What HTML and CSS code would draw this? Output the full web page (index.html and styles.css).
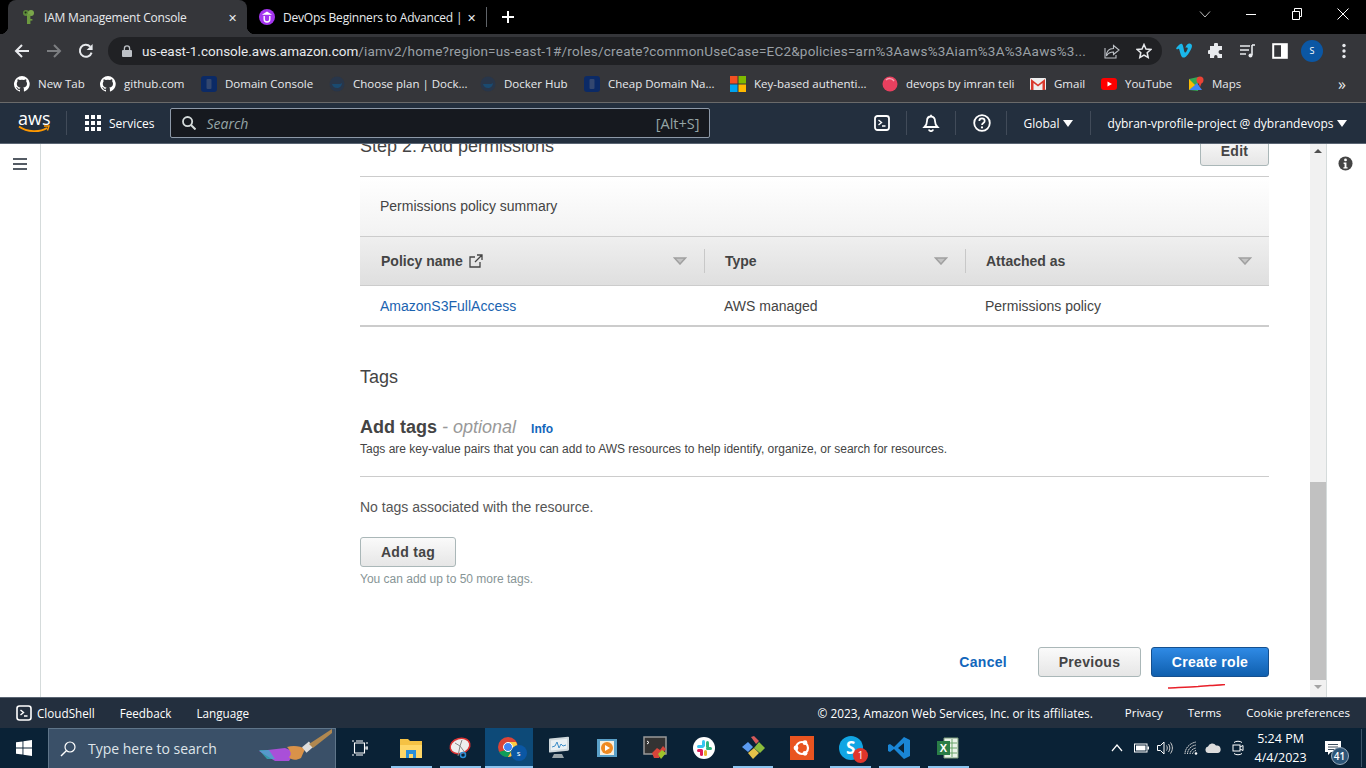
FILE: index.html
```html
<!DOCTYPE html>
<html lang="en">
<head>
  <meta charset="UTF-8" />
  <title>IAM Management Console</title>
  <link rel="stylesheet" href="styles.css">
</head>
<body>

  <!-- browser chrome -->
  <div class="tabstrip">
    <div class="tab tab-active">
      <svg class="favicon" viewBox="0 0 16 16"><circle cx="6" cy="4" r="3" fill="#5c8a3a"/><circle cx="11" cy="4" r="3" fill="#7aa64a"/><rect x="7" y="5" width="3.4" height="10" fill="#6d9a40"/><rect x="10" y="10" width="2.4" height="1.6" fill="#6d9a40"/><circle cx="5.6" cy="3.6" r="1" fill="#1e2a16"/></svg>
      <span class="tab-title">IAM Management Console</span>
      <span class="tab-x">✕</span>
    </div>
    <div class="tab">
      <svg class="favicon" viewBox="0 0 16 16"><circle cx="8" cy="8" r="8" fill="#a435f0"/><path d="M5.2 7v3.2a2.8 2.8 0 0 0 5.6 0V7M8 3.4 5.4 5h5.2z" fill="none" stroke="#fff" stroke-width="1.4"/></svg>
      <span class="tab-title">DevOps Beginners to Advanced |</span>
      <span class="tab-x">✕</span>
    </div>
    <span class="tab-sep"></span>
    <svg class="new-tab" viewBox="0 0 12 12"><path d="M6 0v12M0 6h12" stroke="#fff" stroke-width="2"/></svg>
    <div class="win-controls">
      <svg viewBox="0 0 12 12"><path d="M1 3.5 6 9l5-5.5" fill="none" stroke="#bbb"/></svg>
      <svg viewBox="0 0 12 12"><path d="M1 6.5h10" stroke="#fff"/></svg>
      <svg viewBox="0 0 12 12"><path d="M1.5 3.5h7v8h-7zM3.5 3.5V.5h7v8h-2" fill="none" stroke="#fff"/></svg>
      <svg viewBox="0 0 12 12"><path d="M.5.5l11 11M11.5.5l-11 11" stroke="#fff"/></svg>
    </div>
  </div>

  <div class="toolbar">
    <svg class="tool-btn" viewBox="0 0 16 16"><path d="M15 8H2M8 2 2 8l6 6" fill="none" stroke="#e8eaed" stroke-width="2"/></svg>
    <svg class="tool-btn" viewBox="0 0 16 16"><path d="M1 8h13M8 2l6 6-6 6" fill="none" stroke="#7c7e81" stroke-width="2"/></svg>
    <svg class="tool-btn" viewBox="0 0 16 16"><path d="M13.6 9.6A6 6 0 1 1 12.2 3.6" fill="none" stroke="#e8eaed" stroke-width="2"/><path d="M14.6 1v6h-6z" fill="#e8eaed"/></svg>
    <div class="omnibox">
      <svg class="lock" viewBox="0 0 10 12"><rect y="5" width="10" height="7" rx="1" fill="#bdc1c6"/><path d="M2.4 5.5V3.4a2.6 2.6 0 0 1 5.2 0v2.1" fill="none" stroke="#bdc1c6" stroke-width="1.3"/></svg>
      <span class="url"><b>us-east-1.console.aws.amazon.com</b>/iamv2/home?region=us-east-1#/roles/create?commonUseCase=EC2&amp;policies=arn%3Aaws%3Aiam%3A%3Aaws%3...</span>
      <svg class="omni-icon" viewBox="0 0 16 16"><path d="M9.500 2.500 15 7l-5.500 4.500V9C6 9 4 10 2.500 13c0-4.500 2.500-7.500 7-7.500z M1 5v10h11v-3" fill="none" stroke="#bdc1c6" stroke-width="1.100"/></svg>
      <svg class="omni-icon" viewBox="0 0 16 16"><path d="m8 1.500 2 4.500 4.800.5-3.600 3.200 1 4.800L8 12.100l-4.200 2.400 1-4.800L1.200 6.500 6 6z" fill="none" stroke="#e8eaed" stroke-width="1.500"/></svg>
    </div>
    <div class="ext-icons">
      <svg viewBox="0 0 16 16"><path d="M0 5.200 1 6.500c1-.7 1.700-1 2-.6.800 1 1.500 6.700 3.300 8.300 1.600 1.300 4-.6 5.800-3C14 8.500 16 5 16 3c0-2-1.500-2.800-3-2.500-1.700.3-3 2-3.600 4.300 1-.5 2.300-.6 2.300.6 0 1-1.800 4.200-2.600 4.200-1 0-1.500-5.500-2.400-7.600C6 .4 4.800.6 3.500 1.500 2.300 2.500 1 4 0 5.200z" fill="#1ab7ea"/></svg>
      <svg viewBox="0 0 16 16"><path d="M6 1.500a2 2 0 0 1 4 0V3h4v4h-1.500a2 2 0 0 0 0 4H14v4H9.500v-1.200a1.700 1.700 0 0 0-3.400 0V15H2v-4h-.5a2 2 0 0 1 0-4H2V3h4z" fill="#e8eaed"/></svg>
      <svg viewBox="0 0 16 16"><path d="M0 3h10M0 7h9M0 11h6" stroke="#e8eaed" stroke-width="1.600"/><path d="M12 2v10" stroke="#e8eaed" stroke-width="1.600"/><path d="M12 2h3" stroke="#e8eaed" stroke-width="1.600"/><circle cx="10.500" cy="12.500" r="2" fill="#e8eaed"/></svg>
      <svg viewBox="0 0 16 16"><rect x="1.200" y="1.200" width="13.600" height="13.600" fill="none" stroke="#fff" stroke-width="2"/><rect x="9" y="1" width="6" height="14" fill="#fff"/></svg>
      <span class="avatar">S</span>
      <svg viewBox="0 0 16 16"><circle cx="8" cy="2.500" r="1.700" fill="#e8eaed"/><circle cx="8" cy="8" r="1.700" fill="#e8eaed"/><circle cx="8" cy="13.500" r="1.700" fill="#e8eaed"/></svg>
    </div>
  </div>

  <div class="bookmarks">
    <a><svg viewBox="0 0 16 16"><path fill="#fff" d="M8 0a8 8 0 0 0-2.500 15.600c.4.100.5-.2.500-.4v-1.400c-2.200.5-2.700-1-2.700-1-.4-.9-.9-1.200-.9-1.200-.7-.5.100-.5.100-.5.800.1 1.200.8 1.200.8.700 1.200 1.900.9 2.300.7.100-.5.300-.9.500-1.100-1.800-.2-3.700-.9-3.700-4 0-.9.300-1.600.8-2.100-.1-.2-.4-1 .1-2.100 0 0 .7-.2 2.200.8a7.600 7.600 0 0 1 4 0c1.500-1 2.200-.8 2.200-.8.400 1.100.2 1.900.1 2.100.5.600.8 1.300.8 2.100 0 3.100-1.900 3.700-3.700 3.900.3.300.6.800.6 1.500v2.200c0 .2.100.5.600.4A8 8 0 0 0 8 0z"/></svg>New Tab</a>
    <a><svg viewBox="0 0 16 16"><path fill="#fff" d="M8 0a8 8 0 0 0-2.500 15.600c.4.100.5-.2.500-.4v-1.400c-2.200.5-2.700-1-2.700-1-.4-.9-.9-1.200-.9-1.200-.7-.5.100-.5.100-.5.800.1 1.200.8 1.200.8.700 1.200 1.900.9 2.300.7.100-.5.300-.9.500-1.100-1.800-.2-3.700-.9-3.700-4 0-.9.300-1.600.8-2.100-.1-.2-.4-1 .1-2.100 0 0 .7-.2 2.200.8a7.600 7.600 0 0 1 4 0c1.500-1 2.200-.8 2.200-.8.400 1.100.2 1.900.1 2.100.5.600.8 1.300.8 2.100 0 3.100-1.900 3.700-3.700 3.900.3.300.6.800.6 1.500v2.200c0 .2.100.5.600.4A8 8 0 0 0 8 0z"/></svg>github.com</a>
    <a><svg viewBox="0 0 16 16"><rect width="16" height="16" rx="3" fill="#0b2a66"/><rect x="5.500" y="3" width="5" height="10" rx="1" fill="#33476f"/></svg>Domain Console</a>
    <a><svg viewBox="0 0 16 16"><circle cx="8" cy="8" r="7.500" fill="#28364a"/><path d="M3 8h8c1 0 1.500-.8 2-1 0 3-2.500 5-5 5-3 0-4.500-2-5-4z" fill="#1a4a70"/></svg>Choose plan | Dock...</a>
    <a><svg viewBox="0 0 16 16"><circle cx="8" cy="8" r="7.500" fill="#28364a"/><path d="M3 8h8c1 0 1.500-.8 2-1 0 3-2.500 5-5 5-3 0-4.500-2-5-4z" fill="#1a4a70"/></svg>Docker Hub</a>
    <a><svg viewBox="0 0 16 16"><rect width="16" height="16" rx="3" fill="#0b2a66"/><rect x="5.500" y="3" width="5" height="10" rx="1" fill="#33476f"/></svg>Cheap Domain Na...</a>
    <a><svg viewBox="0 0 16 16"><rect width="7.500" height="7.500" fill="#f25022"/><rect x="8.500" width="7.500" height="7.500" fill="#7fba00"/><rect y="8.500" width="7.500" height="7.500" fill="#00a4ef"/><rect x="8.500" y="8.500" width="7.500" height="7.500" fill="#ffb900"/></svg>Key-based authenti...</a>
    <a><svg viewBox="0 0 16 16"><circle cx="8" cy="8" r="7.500" fill="#e8405f"/><path d="M4 4c2-2 6-2 8 1" fill="none" stroke="#f7a3b2" stroke-width="1.500"/></svg>devops by imran teli</a>
    <a><svg viewBox="0 0 16 16"><rect y="2" width="16" height="12" rx="1" fill="#eee"/><path d="M1 3v11h2.500V7L8 10.500 12.500 7v7H15V3L8 8.500z" fill="#d9382c"/></svg>Gmail</a>
    <a><svg viewBox="0 0 16 16"><rect y="2" width="16" height="12" rx="3" fill="#f00"/><path d="M6.500 5.500v5L11 8z" fill="#fff"/></svg>YouTube</a>
    <a><svg viewBox="0 0 16 16"><path d="M1 3 10 1v14l-9-1z" fill="#34a853"/><path d="m1 14 8-7 5 7z" fill="#4285f4"/><path d="m1 3 6 6-6 5z" fill="#fbbc04"/><circle cx="12" cy="4" r="3.500" fill="#ea4335"/><path d="M10 6l2 5 2-5z" fill="#ea4335"/></svg>Maps</a>
    <span class="more">»</span>
  </div>

  <!-- aws console header -->
  <header class="aws-nav">
    <div class="aws-logo">
      <span class="aws-word">aws</span>
      <svg viewBox="0 0 32 8"><path d="M1 1.500c8 6 21 6 28 1.500" fill="none" stroke="#f90" stroke-width="1.800"/><path d="M26 1h5l-1.500 4.500" fill="none" stroke="#f90" stroke-width="1.400"/></svg>
    </div>
    <span class="nav-div nav-div-logo"></span>
    <svg class="services-grid" viewBox="0 0 16 16"><path fill="#fff" d="M0 0h4v4H0zM6 0h4v4H6zM12 0h4v4h-4zM0 6h4v4H0zM6 6h4v4H6zM12 6h4v4h-4zM0 12h4v4H0zM6 12h4v4H6zM12 12h4v4h-4z"/></svg>
    <span class="nav-text">Services</span>
    <div class="search">
      <svg viewBox="0 0 14 14"><circle cx="5.600" cy="5.600" r="4.600" fill="none" stroke="#d5dbdb" stroke-width="1.800"/><path d="m9 9 4.500 4.500" stroke="#d5dbdb" stroke-width="2"/></svg>
      <span class="search-text">Search</span>
      <span class="search-key">[Alt+S]</span>
    </div>
    <div class="nav-right">
      <svg class="nav-icon" viewBox="-1 -1 18 18"><rect x="1" y="1" width="14" height="14" rx="2.500" fill="none" stroke="#fff" stroke-width="1.800"/><path d="m4.500 5 3 2.500-3 2.500M8 11h3.500" fill="none" stroke="#fff" stroke-width="1.400"/></svg>
      <span class="nav-div"></span>
      <svg class="nav-icon" viewBox="0 0 18 18"><path d="M9 2.500c-2.800 0-4 2-4 4.500 0 3-1 4.500-2.500 6h13C14 11.500 13 10 13 7c0-2.500-1.200-4.500-4-4.500zM9 .8v1.700M6.800 15.500a2.300 2.300 0 0 0 4.400 0" fill="none" stroke="#fff" stroke-width="1.800"/></svg>
      <span class="nav-div"></span>
      <svg class="nav-icon nav-help" viewBox="0 0 18 18"><circle cx="9" cy="9" r="7.800" fill="none" stroke="#fff" stroke-width="1.800"/><path d="M6.300 7c0-3.400 5.400-3.400 5.400 0 0 2-2.700 2-2.700 4" fill="none" stroke="#fff" stroke-width="1.700"/><circle cx="9" cy="13.400" r="1.100" fill="#fff"/></svg>
      <span class="nav-div"></span>
      <span class="nav-text nav-drop">Global <i class="caret"></i></span>
      <span class="nav-div"></span>
      <span class="nav-text nav-drop nav-account">dybran-vprofile-project @ dybrandevops <i class="caret"></i></span>
    </div>
  </header>

  <div class="page">
    <aside class="side-nav">
      <svg viewBox="0 0 14 12"><path d="M0 1h14M0 6h14M0 11h14" stroke="#545b64" stroke-width="2"/></svg>
    </aside>

    <main class="content">
      <div class="step-head">
        <h2 class="step-title">Step 2: Add permissions</h2>
        <button class="btn btn-edit">Edit</button>
      </div>

      <div class="summary-title">Permissions policy summary</div>
      <div class="table-head">
        <div class="th th-first">
          <span>Policy name <svg class="ext-link" viewBox="0 0 14 14"><path d="M11 8v5H1V3h5M8 1h5v5M13 1 6 8" fill="none" stroke="#444" stroke-width="1.300"/></svg></span>
          <svg class="sort" viewBox="0 0 14 8"><path d="M1.500 1h11L7 7z" fill="#c4c4c4" stroke="#a0a0a0" stroke-width="1.500"/></svg>
        </div>
        <div class="th">
          <span>Type</span>
          <svg class="sort" viewBox="0 0 14 8"><path d="M1.500 1h11L7 7z" fill="#c4c4c4" stroke="#a0a0a0" stroke-width="1.500"/></svg>
        </div>
        <div class="th">
          <span>Attached as</span>
          <svg class="sort" viewBox="0 0 14 8"><path d="M1.500 1h11L7 7z" fill="#c4c4c4" stroke="#a0a0a0" stroke-width="1.500"/></svg>
        </div>
      </div>
      <div class="table-row">
        <a class="policy-link">AmazonS3FullAccess</a>
        <span>AWS managed</span>
        <span>Permissions policy</span>
      </div>

      <h2 class="tags-title">Tags</h2>
      <h3 class="add-tags">Add tags <em>- optional</em> <a class="info-link">Info</a></h3>
      <p class="tags-desc">Tags are key-value pairs that you can add to AWS resources to help identify, organize, or search for resources.</p>
      <hr class="tags-rule">
      <p class="no-tags">No tags associated with the resource.</p>
      <button class="btn btn-add">Add tag</button>
      <p class="tags-note">You can add up to 50 more tags.</p>

      <div class="actions">
        <a class="cancel">Cancel</a>
        <button class="btn btn-prev">Previous</button>
        <button class="btn btn-primary">Create role</button>
        <svg class="scribble" viewBox="0 0 58 5"><path d="M0 4c10-.5 22-1 30-1.500 5-.5 8-.5 12-1 5 0 10-.5 15-1" fill="none" stroke="#e8202a" stroke-width="1.500"/></svg>
      </div>
    </main>

    <div class="scrollbar">
      <i class="arrow-up"></i>
      <div class="thumb"></div>
      <i class="arrow-down"></i>
    </div>

    <aside class="info-rail">
      <svg viewBox="0 0 16 16"><circle cx="8" cy="8" r="7.500" fill="#444"/><circle cx="8" cy="4.200" r="1.500" fill="#fff"/><path d="M6 7h3v5h1.200v1.400H5.800V12H7V8.400H6z" fill="#fff"/></svg>
    </aside>
  </div>

  <footer class="aws-footer">
    <svg viewBox="0 0 16 16"><rect x="1" y="1" width="14" height="14" rx="2.500" fill="none" stroke="#fff" stroke-width="1.600"/><path d="m4.500 5 3 2.500-3 2.500M8 11h3.500" fill="none" stroke="#fff" stroke-width="1.400"/></svg>
    <a class="foot-shell">CloudShell</a>
    <a>Feedback</a>
    <a>Language</a>
    <span class="foot-right">
      <span class="foot-copy">© 2023, Amazon Web Services, Inc. or its affiliates.</span>
      <a>Privacy</a>
      <a>Terms</a>
      <a>Cookie preferences</a>
    </span>
  </footer>

  <!-- windows taskbar -->
  <div class="taskbar">
    <svg class="start" viewBox="0 0 16 16"><path fill="#fff" d="M0 2.300 6.500 1.400v6.200H0zM7.400 1.300 16 0v7.600H7.400zM0 8.400h6.500v6.200L0 13.700zM7.400 8.400H16V16l-8.600-1.300z"/></svg>
    <div class="win-search">
      <svg viewBox="0 0 16 16"><circle cx="10" cy="6" r="5" fill="none" stroke="#fff" stroke-width="1.200"/><path d="M6.300 9.700 1 15" stroke="#fff" stroke-width="1.400"/></svg>
      <span>Type here to search</span>
      <svg class="broom" viewBox="0 0 76 36"><path d="M0 22l26-3 10 4-6 9H16z" fill="#a94fd8"/><path d="M0 21h10l6 9H8z" fill="#35b8c8" opacity=".7"/><path d="M28 18c6-2 14-1 18 2l-4 9c-5 3-10 2-12-1 3-2 2-6-2-10z" fill="#d99249"/><rect x="44" y="15" width="9" height="7" fill="#ddd" transform="rotate(-40 48 18)"/><path d="M50 15 73 0v4L54 19z" fill="#b08850"/></svg>
    </div>
    <div class="task-icons">
      <div class="task task-view"><svg viewBox="0 0 16 16"><path d="M2.500 3h10v10h-10zM0 1h2M4 1h7M0 15h2M4 15h7M14 3h2M14 7h2v2h-2z" fill="none" stroke="#fff" stroke-width="1.100"/></svg></div>
      <div class="task task-open"><svg viewBox="0 0 24 24"><path d="M1 3h8l2 2h12v17H1z" fill="#f5c244"/><rect x="1" y="9" width="22" height="13" fill="#ffd767"/><path d="M7 14h10v8h-3v-4h-4v4H7z" fill="#2a8fd8"/></svg></div>
      <div class="task task-open"><svg viewBox="0 0 24 24"><ellipse cx="12" cy="10" rx="10" ry="7.500" fill="#eee" stroke="#d33" stroke-width="1.500" transform="rotate(-15 12 10)"/><path d="m12 10 2-6M12 10l-5-3M12 10l6 8M12 10l-2 10" stroke="#888"/><circle cx="15" cy="19" r="2.500" fill="none" stroke="#2a8fd8" stroke-width="1.500"/></svg></div>
      <div class="task task-active task-open"><svg viewBox="0 0 24 24"><circle cx="11" cy="11" r="10" fill="#db4437"/><path d="M2 16a10 10 0 0 0 9 5l5-9z" fill="#0f9d58"/><path d="M11 21a10 10 0 0 0 8-15h-8l5 7z" fill="#ffcd40"/><circle cx="11" cy="11" r="4.500" fill="#4285f4" stroke="#fff"/></svg><span class="chrome-badge">s</span></div>
      <div class="task"><svg viewBox="0 0 24 24"><rect x="3" y="3" width="20" height="14" rx="1" fill="#cfd8dc" transform="skewY(-6)"/><rect x="5" y="5" width="16" height="10" fill="#e9f0f3" transform="skewY(-6)"/><path d="M6 11l3-1 2-4 2 6 2-4 2 2 3-1" fill="none" stroke="#3f8fc9"/><path d="M8 18h8l2 4H6z" fill="#9aa5aa"/></svg></div>
      <div class="task"><svg viewBox="0 0 24 24"><rect x="2" y="3" width="20" height="18" fill="#5aa0c8"/><rect x="5" y="5" width="14" height="14" fill="#f6f0e0"/><circle cx="12" cy="12" r="6" fill="#ef8a21"/><path d="M10 9v6l5-3z" fill="#fff"/></svg></div>
      <div class="task"><svg viewBox="0 0 24 24"><rect x="1" y="1" width="22" height="17" fill="#333" stroke="#999" stroke-width="1.500"/><path d="M4 5l2 1.500L4 8" fill="none" stroke="#fff"/><path d="M9 17l5-5 3 2 3-4 3 3-5 6-2 3h-5z" fill="#d8453a"/><path d="M15 18l4-4 4 3-5 6z" fill="#9fc42b"/></svg></div>
      <div class="task"><svg viewBox="0 0 24 24"><circle cx="12" cy="12" r="11" fill="#fff"/><rect x="10" y="4" width="3" height="7" rx="1.500" fill="#36c5f0"/><rect x="5" y="9" width="7" height="3" rx="1.500" fill="#36c5f0"/><rect x="14" y="5" width="3" height="7" rx="1.500" fill="#2eb67d"/><rect x="14" y="11" width="6" height="3" rx="1.500" fill="#2eb67d"/><rect x="12" y="14" width="3" height="6" rx="1.500" fill="#ecb22e"/><rect x="5" y="13" width="6" height="3" rx="1.500" fill="#e01e5a"/><rect x="8" y="14" width="3" height="6" rx="1.500" fill="#e01e5a"/></svg></div>
      <div class="task task-open"><svg viewBox="0 0 24 24"><path d="M7 6l5 5-5 5-6-5z" fill="#5b9bf0"/><path d="M13 12l5 5-6 6-5-6z" fill="#e6c34a"/><path d="M18 6l6 6-5 5-6-5z" fill="#8bbd3c"/><path d="M10 1l3-1 5 5-3 3z" fill="#d65a5a"/></svg></div>
      <div class="task"><svg viewBox="0 0 24 24"><rect width="24" height="24" fill="#e95420"/><circle cx="12" cy="12" r="6" fill="none" stroke="#fff" stroke-width="2.200"/><circle cx="6" cy="12" r="2.400" fill="#fff"/><circle cx="15" cy="6.700" r="2.400" fill="#fff"/><circle cx="15" cy="17.300" r="2.400" fill="#fff"/></svg></div>
      <div class="task task-open"><span class="skype">S</span><span class="skype-badge">1</span></div>
      <div class="task task-open"><svg viewBox="0 0 24 24"><path d="M17 1l6 3v16l-6 3L7 13l-4 3-2-1v-6l2-1 4 3zM17 7l-6 5 6 5z" fill="#1a86d6" fill-rule="evenodd"/></svg></div>
      <div class="task task-open"><svg viewBox="0 0 24 24"><path d="M8 2h14v20H8z" fill="#eaf3e8" stroke="#7a9c7a"/><path d="M12 7h9M12 12h9M12 17h9M16 3v18" stroke="#6aa56a"/><rect x="1" y="5" width="13" height="14" fill="#2a7d46"/><text x="7.500" y="16" class="xl-mark">X</text></svg></div>
    </div>
    <div class="tray">
      <svg class="t-chev" viewBox="0 0 12 8"><path d="m1 7 5-6 5 6" fill="none" stroke="#fff" stroke-width="1.200"/></svg>
      <svg class="t-batt" viewBox="0 0 15 10"><rect x=".5" y="1" width="12.500" height="8" fill="none" stroke="#fff"/><rect x="2" y="2.500" width="9.500" height="5" fill="#fff"/><rect x="13.500" y="3.500" width="1.500" height="3" fill="#fff"/></svg>
      <svg class="t-vol" viewBox="0 0 16 14"><path d="M.5 4.500h3L7 1v12L3.500 9.500h-3z" fill="none" stroke="#fff"/><path d="M9.500 4.500c1 1.500 1 3.500 0 5M11.500 3c1.800 2.500 1.800 5.500 0 8M13.500 1.500c2.500 3.500 2.500 7.500 0 11" fill="none" stroke="#ccc"/></svg>
      <svg class="t-wifi" viewBox="0 0 14 14"><path d="M1 13C1 7 6 2 12 1M3.500 13c0-4.500 4-8.500 8.500-9M6 13c0-3 3-5.500 6-6M8.500 13c0-1.500 1.500-3 3.500-3.500" fill="none" stroke="#ddd" stroke-dasharray="1.500 .6"/><circle cx="12" cy="12.500" r="1.300" fill="#fff"/></svg>
      <svg class="t-cloud" viewBox="0 0 16 10"><path d="M3.500 10a3.300 3.300 0 0 1-.5-6.500A4.500 4.500 0 0 1 11 2.500a3.800 3.800 0 0 1 1.500 7.500z" fill="#ddd"/></svg>
      <svg class="t-meet" viewBox="0 0 12 16"><rect x="1" y="5" width="7" height="6" fill="none" stroke="#fff"/><path d="m8 7 3-1.500v5L8 9M2 2.500C4 .8 8 .8 10 2.500M2 13.500c2 1.700 6 1.700 8 0" fill="none" stroke="#fff"/></svg>
      <div class="clock"><span>5:24 PM</span><span>4/4/2023</span></div>
      <div class="notify">
        <svg viewBox="0 0 16 15"><path d="M0 0h16v11H6l-3 3v-3H0z" fill="#fff"/><path d="M3 3.500h10M3 6h10M3 8.500h7" stroke="#0b2236" stroke-width=".8"/></svg>
        <span class="notify-count">41</span>
      </div>
    </div>
  </div>

</body>
</html>
```

FILE: styles.css
```css
* {
  box-sizing: border-box;
}

body {
  margin: 0;
  width: 1366px;
  height: 768px;
  overflow: hidden;
  display: flex;
  flex-direction: column;
  font-family: "Liberation Sans", Arial, sans-serif;
  background: #fff;
  color: #444;
}

svg {
  display: block;
  flex: none;
}

/* browser chrome */
.tabstrip {
  height: 34px;
  background: #000;
  display: flex;
  align-items: flex-end;
  padding-left: 8px;
  color: #e8eaed;
  font: 12px "Open Sans", sans-serif;
  letter-spacing: -.2px;
}

.tab {
  width: 239px;
  height: 34px;
  padding: 0 8px 0 12px;
  display: flex;
  align-items: center;
  border-radius: 8px 8px 0 0;
  position: relative;
}

.tab-active {
  background: #35363a;
}

.tab-active::before,
.tab-active::after {
  content: "";
  position: absolute;
  bottom: 0;
  width: 8px;
  height: 8px;
}

.tab-active::before {
  left: -8px;
  background: radial-gradient(circle at 0 0, #000 8px, #35363a 8.500px);
}

.tab-active::after {
  right: -8px;
  background: radial-gradient(circle at 100% 0, #000 8px, #35363a 8.500px);
}

.favicon {
  width: 16px;
  height: 16px;
  margin-right: 8px;
}

.tab-title {
  flex: 1;
  white-space: nowrap;
  overflow: hidden;
}

.tab-x {
  width: 14px;
  font-size: 11px;
  text-align: center;
}

.tab-sep {
  width: 1px;
  height: 20px;
  background: #5f6368;
  margin: 0 0 7px 0;
}

.new-tab {
  width: 12px;
  height: 12px;
  margin: 0 0 11px 15px;
}

.win-controls {
  margin-left: auto;
  display: flex;
  align-items: center;
  height: 28px;
  align-self: flex-start;
  padding-right: 17px;
  gap: 34px;
}

.win-controls svg {
  width: 12px;
  height: 12px;
}

.toolbar {
  height: 34px;
  background: #35363a;
  display: flex;
  align-items: center;
  padding-left: 14px;
}

.tool-btn {
  width: 16px;
  height: 16px;
  margin-right: 16px;
}

.omnibox {
  width: 1054px;
  height: 28px;
  margin-left: -2px;
  border-radius: 14px;
  background: #202124;
  display: flex;
  align-items: center;
  padding-left: 14px;
  padding-right: 10px;
}

.lock {
  width: 10px;
  height: 12px;
  margin-right: 10px;
}

.url {
  flex: 1;
  color: #9aa0a6;
  font: 13.500px Roboto, sans-serif;
  letter-spacing: .22px;
  white-space: nowrap;
  overflow: hidden;
}

.url b {
  color: #e8eaed;
  font-weight: 400;
  letter-spacing: 0;
}

.omni-icon {
  width: 16px;
  height: 16px;
  margin-left: 16px;
}

.ext-icons {
  display: flex;
  align-items: center;
  gap: 16px;
  margin-left: 14px;
}

.ext-icons svg {
  width: 16px;
  height: 16px;
}

.avatar {
  width: 22px;
  height: 22px;
  margin: 0 -3px;
  border-radius: 50%;
  background: #0b57a4;
  color: #fff;
  font: 9px/22px "Open Sans", sans-serif;
  text-align: center;
}

.bookmarks {
  height: 35px;
  padding: 0 0 3px 14px;
  background: #35363a;
  border-bottom: 1px solid #6a6a6a;
  display: grid;
  grid-template-columns: 86px 101px 128px 151px 104px 146px 152px 148px 71px 87px 150px 1fr;
  align-items: center;
  color: #e8eaed;
  font: 11.500px/16px "Open Sans", sans-serif;
}

.bookmarks a {
  display: flex;
  align-items: center;
  gap: 8px;
  white-space: nowrap;
}

.bookmarks svg {
  width: 16px;
  height: 16px;
}

.more {
  font-size: 16px;
  line-height: 16px;
}

/* aws console header */
.aws-nav {
  height: 41px;
  background: #232f3e;
  border-bottom: 1px solid #5a6573;
  display: flex;
  align-items: center;
  padding-left: 18px;
  color: #fff;
  font: 12px "Open Sans", sans-serif;
}

.aws-logo {
  width: 32px;
}

.aws-word {
  display: block;
  font: 18px/14px "Open Sans", sans-serif;
  text-align: center;
  margin-top: -3px;
}

.aws-logo svg {
  width: 32px;
  height: 8px;
}

.nav-div {
  width: 1px;
  height: 24px;
  background: #414b59;
}

.nav-div-logo {
  margin: 0 18px 0 16px;
}

.services-grid {
  width: 16px;
  height: 16px;
  margin-right: 8px;
}

.nav-text {
  white-space: nowrap;
}

.search {
  flex: none;
  width: 540px;
  height: 30px;
  margin-left: 16px;
  background: #16191f;
  border: 1px solid #8d99a8;
  border-radius: 2px;
  display: flex;
  align-items: center;
  padding: 0 10px 0 11px;
}

.search svg {
  width: 14px;
  height: 14px;
  margin-right: 10px;
}

.search-text {
  flex: 1;
  color: #95a5a6;
  font-style: italic;
  font-size: 14px;
}

.search-key {
  color: #95a5a6;
  font-size: 14.500px;
}

.nav-right {
  display: flex;
  align-items: center;
  margin-left: 148px;
}

.nav-icon {
  width: 18px;
  height: 18px;
  margin: 0 15px;
}

.nav-help {
  margin-left: 17px;
}

.nav-drop {
  padding: 0 17px 0 16px;
}

.nav-account {
  padding-left: 17px;
}

.caret {
  display: inline-block;
  border: 5px solid transparent;
  border-top: 7px solid #fff;
  border-bottom: 0;
  vertical-align: 1px;
}

/* page area */
.page {
  flex: 1;
  min-height: 0;
  display: flex;
  overflow: hidden;
}

.side-nav {
  width: 41px;
  border-right: 1px solid #d5dbdb;
  padding: 14px 0 0 13px;
}

.side-nav svg {
  width: 14px;
  height: 12px;
}

.content {
  width: 1269px;
  padding: 0 41px 0 319px;
  font-size: 14px;
}

.step-head {
  display: flex;
  justify-content: space-between;
  margin-top: -8px;
  height: 41px;
  border-bottom: 1px solid #ccc;
}

.step-title {
  margin: 0;
  font-size: 18px;
  font-weight: 400;
  line-height: 20px;
}

.btn {
  display: block;
  height: 30px;
  padding: 0;
  border: 1px solid #aab7b8;
  border-radius: 3px;
  background: linear-gradient(#fafafa, #e6e6e6);
  color: #444;
  font: bold 14px "Liberation Sans", Arial, sans-serif;
  letter-spacing: .3px;
}

.btn-edit {
  width: 69px;
}

.summary-title {
  height: 59px;
  padding-left: 20px;
  line-height: 58px;
  background: linear-gradient(#fff, #f2f2f2);
}

.table-head {
  height: 50px;
  display: grid;
  grid-template-columns: 344px 261px 304px;
  align-items: center;
  border-top: 1px solid #ccc;
  border-bottom: 1px solid #ccc;
  background: linear-gradient(#efefef, #dfdfdf);
  font-weight: bold;
}

.th {
  height: 24px;
  padding: 0 17px 0 20px;
  border-left: 1px solid #c8c8c8;
  display: flex;
  align-items: center;
  justify-content: space-between;
}

.th-first {
  border-left: 0;
  padding-left: 21px;
}

.th span {
  display: flex;
  align-items: center;
  gap: 6px;
}

.ext-link {
  width: 14px;
  height: 14px;
}

.sort {
  width: 14px;
  height: 8px;
}

.table-row {
  height: 41px;
  display: grid;
  grid-template-columns: 344px 261px 304px;
  align-items: center;
  border-bottom: 2px solid #ccc;
}

.table-row > * {
  padding-left: 20px;
}

.policy-link {
  color: #1a63b0;
}

.tags-title {
  margin: 40px 0 0;
  font-size: 18px;
  font-weight: 400;
  line-height: 20px;
}

.add-tags {
  margin: 28px 0 0;
  font-size: 18px;
  line-height: 24px;
}

.add-tags em {
  color: #999;
  font-weight: 400;
}

.info-link {
  margin-left: 10px;
  color: #1166bb;
  font-size: 12px;
}

.tags-desc {
  margin: 1px 0 0;
  font-size: 12px;
  line-height: 14px;
}

.tags-rule {
  margin: 20px 0 0;
  border: 0;
  border-top: 1px solid #ccc;
}

.no-tags {
  margin: 20px 0 0;
  line-height: 20px;
  color: #555;
}

.btn-add {
  width: 96px;
  margin-top: 20px;
}

.tags-note {
  margin: 5px 0 0;
  font-size: 12px;
  line-height: 14px;
  color: #879596;
}

.actions {
  position: relative;
  display: flex;
  justify-content: flex-end;
  align-items: center;
  margin-top: 61px;
}

.cancel {
  margin-right: 31px;
  color: #1166bb;
  font-weight: bold;
  letter-spacing: .3px;
}

.btn-prev {
  width: 103px;
  margin-right: 10px;
}

.btn-primary {
  width: 118px;
  border-color: #15508f;
  background: linear-gradient(#2f8ae5, #0f5fae);
  color: #fff;
}

.scribble {
  position: absolute;
  left: 808px;
  top: 37px;
  width: 58px;
  height: 5px;
}

.scrollbar {
  width: 16px;
  background: #f1f1f1;
  display: flex;
  flex-direction: column;
  align-items: center;
}

.arrow-up,
.arrow-down {
  border: 4px solid transparent;
  margin-top: 5px;
}

.arrow-up {
  border-top: 0;
  border-bottom: 4px solid #505050;
}

.arrow-down {
  border-bottom: 0;
  border-top: 4px solid #a3a3a3;
}

.thumb {
  width: 16px;
  height: 198px;
  margin-top: 329px;
  background: #c1c1c1;
}

.info-rail {
  width: 40px;
  border-left: 1px solid #d5dbdb;
  padding: 12px 0 0 11px;
}

.info-rail svg {
  width: 15px;
  height: 15px;
}

/* footer and taskbar */
.aws-footer {
  height: 31px;
  background: #232f3e;
  border-top: 1px solid #5a6573;
  display: flex;
  align-items: center;
  padding: 0 16px;
  gap: 25px;
  color: #fff;
  font: 11.700px "Open Sans", sans-serif;
}

.aws-footer svg {
  width: 16px;
  height: 16px;
  margin-right: -20px;
}

.foot-right {
  margin-left: auto;
  display: flex;
  gap: 25px;
  font-size: 11.500px;
}

.foot-copy {
  margin-right: 7px;
  font-size: 11.800px;
}

.taskbar {
  height: 40px;
  background: #0a2236;
  display: flex;
  align-items: center;
  color: #fff;
  font: 12.500px "Open Sans", sans-serif;
}

.start {
  width: 16px;
  height: 16px;
  margin: 0 16px;
}

.win-search {
  width: 288px;
  height: 40px;
  background: #3a5068;
  border: 1px solid #5f7589;
  border-bottom: 0;
  display: flex;
  align-items: center;
  padding-left: 11px;
  position: relative;
  color: #dfe5ea;
  font-size: 14px;
}

.win-search > svg:first-child {
  width: 16px;
  height: 16px;
  margin-right: 12px;
}

.broom {
  position: absolute;
  right: 0;
  top: 0;
  width: 76px;
  height: 36px;
}

.task-icons {
  display: flex;
  height: 40px;
}

.task {
  flex: none;
  width: 48.800px;
  height: 40px;
  display: flex;
  align-items: center;
  justify-content: center;
  position: relative;
}

.task svg {
  width: 24px;
  height: 24px;
}

.task-view {
  width: 48px;
  margin-right: 3px;
}

.task-view svg {
  width: 16px;
  height: 16px;
}

.task-open::after {
  content: "";
  position: absolute;
  left: 4px;
  right: 4px;
  bottom: 0;
  height: 2px;
  background: #8cc4ef;
}

.task-active {
  background: #0d4a78;
}

.task-active::after {
  left: 0;
  right: 0;
}

.chrome-badge {
  position: absolute;
  left: 26px;
  top: 17px;
  width: 16px;
  height: 16px;
  border-radius: 50%;
  background: #0b57a4;
  font-size: 8px;
  line-height: 16px;
  text-align: center;
}

.skype {
  width: 24px;
  height: 24px;
  border-radius: 50%;
  background: #11a5e3;
  font: bold 17px/24px "Open Sans", sans-serif;
  text-align: center;
}

.skype-badge {
  position: absolute;
  left: 27px;
  top: 20px;
  width: 15px;
  height: 15px;
  border-radius: 50%;
  background: #e0352b;
  font-size: 10px;
  line-height: 15px;
  text-align: center;
}

.xl-mark {
  fill: #fff;
  font: bold 11px "Liberation Sans", sans-serif;
  text-anchor: middle;
}

.tray {
  flex: 1;
  display: flex;
  align-items: center;
  position: relative;
}

.tray::after {
  content: "";
  position: absolute;
  right: 4px;
  top: 0;
  bottom: 0;
  width: 1px;
  background: #3c5468;
}

.t-chev {
  width: 12px;
  height: 8px;
  margin-left: 138px;
}

.t-batt {
  width: 15px;
  height: 10px;
  margin-left: 11px;
}

.t-vol {
  width: 16px;
  height: 14px;
  margin-left: 8px;
}

.t-wifi {
  width: 14px;
  height: 14px;
  margin-left: 11px;
}

.t-cloud {
  width: 16px;
  height: 10px;
  margin-left: 7px;
}

.t-meet {
  width: 12px;
  height: 16px;
  margin-left: 11px;
}

.clock {
  width: 72px;
  margin-left: 1px;
  display: flex;
  flex-direction: column;
  align-items: center;
  line-height: 19px;
}

.notify {
  position: relative;
  margin-left: 8px;
}

.notify svg {
  width: 16px;
  height: 15px;
}

.notify-count {
  position: absolute;
  left: 6px;
  top: 6px;
  width: 18px;
  height: 18px;
  border-radius: 50%;
  background: #2d5577;
  border: 1px solid #9ab;
  font-size: 10px;
  font-weight: 600;
  line-height: 16px;
  text-align: center;
}
```
